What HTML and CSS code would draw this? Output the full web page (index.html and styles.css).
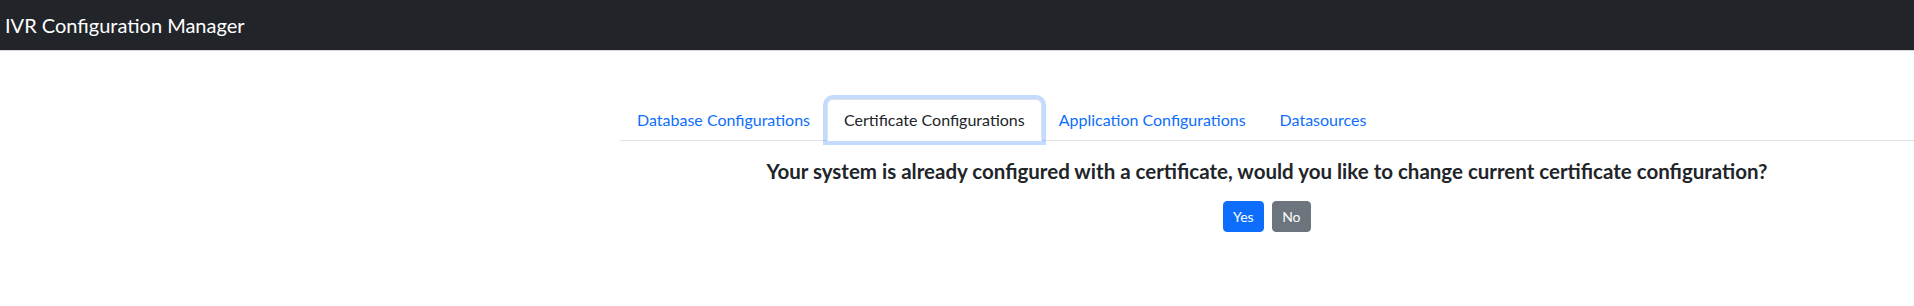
FILE: index.html
```html
<html>
<head>
    <link rel="stylesheet" href="styles.css">
</head>
<body>
    <nav class="top-bar">
        <span class="brand">IVR Configuration Manager</span>
    </nav>
    <div class="content">
        <ul class="tabs">
            <li><a class="tab-link">Database Configurations</a></li>
            <li><a class="tab-link active">Certificate Configurations</a></li>
            <li><a class="tab-link">Application Configurations</a></li>
            <li><a class="tab-link">Datasources</a></li>
        </ul>
        <div class="tab-pane">
            <h5 class="question">Your system is already configured with a certificate, would you like to change current certificate configuration?</h5>
            <div class="actions">
                <button class="btn btn-blue">Yes</button>
                <button class="btn btn-grey">No</button>
            </div>
        </div>
    </div>
</body>
</html>
```
FILE: styles.css
```css
:root {
    --def-fg: #212529;
    --def-link: #0d6efd;
    --def-line: #dee2e6;
    --def-fn: "Lato", "Liberation Sans", sans-serif;
}

* {
    box-sizing: border-box;
    margin: 0px;
    padding: 0px;
}

body {
    font-family: var(--def-fn);
    font-size: 16px;
    color: var(--def-fg);
    background-color: #fff;
}

.top-bar {
    display: flex;
    align-items: center;
    height: 51px;
    padding-left: 5px;
    background-color: #212529;
    border-bottom: 1px solid #d4d6d9;
}

.brand {
    color: #fff;
    font-size: 20px;
    line-height: 30px;
}

.content {
    margin: 48px 0 0 620px;
}

.tabs {
    display: flex;
    list-style: none;
    border-bottom: 1px solid var(--def-line);
}

.tab-link {
    display: block;
    margin-bottom: -1px;
    padding: 8px 16px;
    line-height: 24px;
    color: var(--def-link);
    border: 1px solid transparent;
    border-radius: 6px 6px 0 0;
    cursor: pointer;
}

.tab-link.active {
    color: var(--def-fg);
    background-color: #fff;
    border-color: var(--def-line) var(--def-line) #fff;
    box-shadow: 0 0 0 4px rgba(13, 110, 253, 0.25);
}

.tab-pane {
    text-align: center;
}

.question {
    margin-top: 18px;
    font-size: 20.5px;
    font-weight: 700;
    line-height: 24px;
}

.actions {
    display: flex;
    justify-content: center;
    gap: 8px;
    margin-top: 18px;
}

.btn {
    padding: 4px 9px;
    font-family: var(--def-fn);
    font-size: 14px;
    line-height: 21px;
    color: #fff;
    border: 1px solid transparent;
    border-radius: 4px;
}

.btn-blue {
    background-color: #0d6efd;
    border-color: #0d6efd;
}

.btn-grey {
    padding: 4px 9.5px;
    background-color: #6c757d;
    border-color: #6c757d;
}
```
